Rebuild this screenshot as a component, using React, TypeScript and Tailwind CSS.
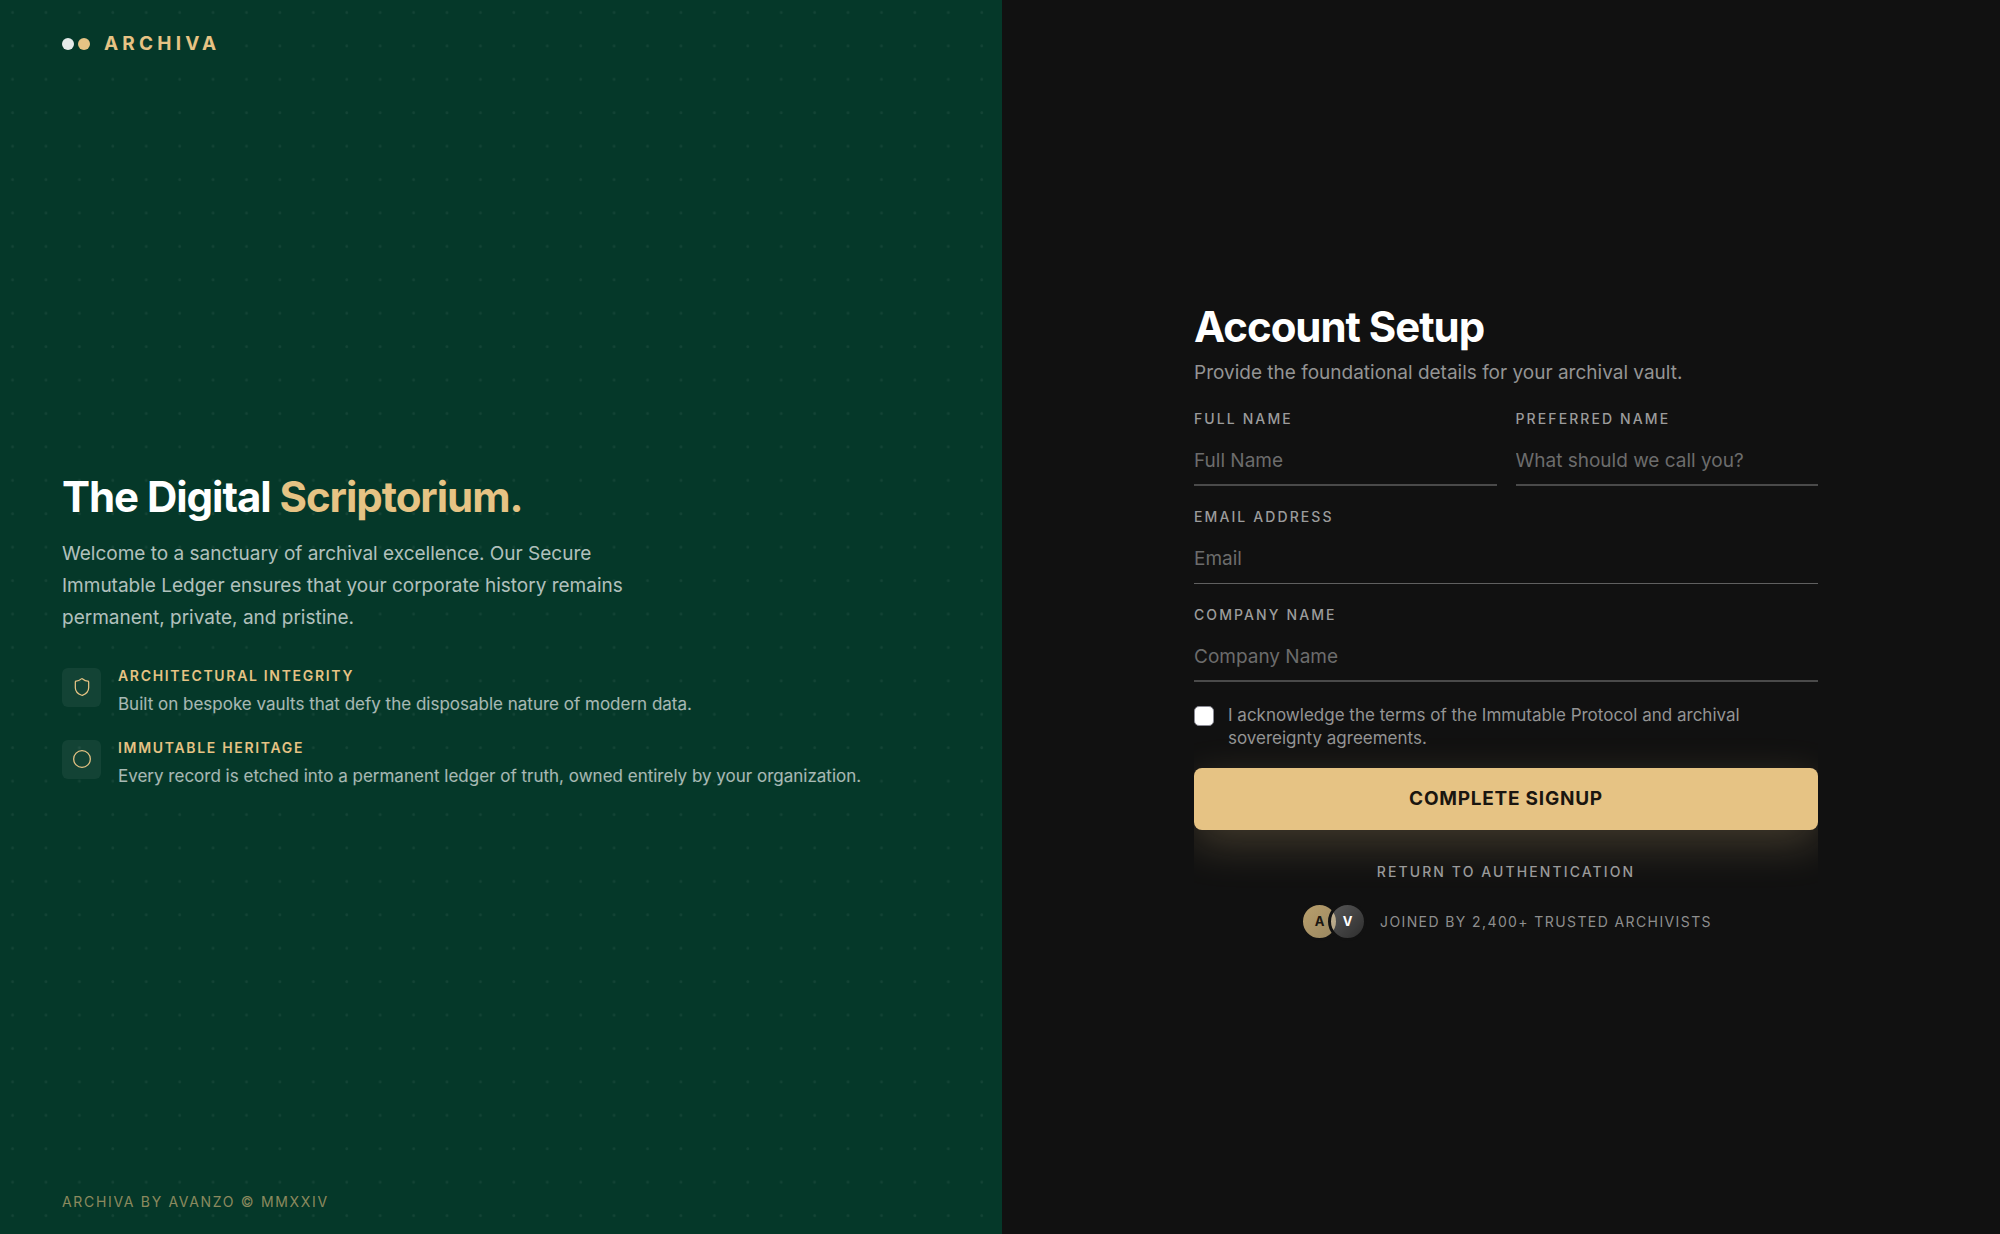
import React from "react";
import { Circle, Shield, type LucideIcon } from "lucide-react";

const FEATURES: { icon: LucideIcon; title: string; text: string }[] = [
  {
    icon: Shield,
    title: "Architectural Integrity",
    text: "Built on bespoke vaults that defy the disposable nature of modern data.",
  },
  {
    icon: Circle,
    title: "Immutable Heritage",
    text: "Every record is etched into a permanent ledger of truth, owned entirely by your organization.",
  },
];

function DotGrid() {
  return (
    <svg aria-hidden="true" className="pointer-events-none absolute inset-0 h-full w-full">
      <defs>
        <pattern
          id="dots"
          width="24"
          height="24"
          patternUnits="userSpaceOnUse"
          patternTransform="scale(1.3925)"
        >
          <circle cx="9" cy="9" r="1" fill="#fff" fillOpacity="0.06" />
        </pattern>
      </defs>
      <rect width="100%" height="100%" fill="url(#dots)" />
    </svg>
  );
}

function BrandPanel() {
  return (
    <section className="relative flex w-[50.1%] flex-col justify-between bg-[#053829] px-[62px] py-[22px]">
      <DotGrid />
      <header className="relative flex h-11 items-center gap-3.5">
        <span className="flex gap-1" aria-hidden="true">
          <span className="size-3 rounded-full bg-[#e6ebe9]" />
          <span className="size-3 rounded-full bg-[#e6c384]" />
        </span>
        <span className="text-[19px] leading-6 font-bold tracking-[0.22em] text-[#e6c384]">
          ARCHIVA
        </span>
      </header>

      <div className="relative">
        <h1 className="text-[42px] leading-[52px] font-bold tracking-tight text-white">
          The Digital <span className="text-[#e6c384]">Scriptorium.</span>
        </h1>
        <p className="mt-[15px] max-w-[600px] text-[19px] leading-8 text-white/70">
          Welcome to a sanctuary of archival excellence. Our Secure Immutable Ledger ensures that
          your corporate history remains permanent, private, and pristine.
        </p>
        <ul className="mt-8 flex flex-col gap-[22px]">
          {FEATURES.map(({ icon: Icon, title, text }) => (
            <li key={title} className="flex items-start gap-[17px]">
              <span className="mt-0.5 flex size-[39px] shrink-0 items-center justify-center rounded-md bg-white/6">
                <Icon size={20} strokeWidth={1.5} className="text-[#e6c384]" aria-hidden="true" />
              </span>
              <div>
                <h2 className="text-[14px] leading-5 font-semibold tracking-[0.12em] text-[#e6c384] uppercase">
                  {title}
                </h2>
                <p className="mt-1.5 text-[17px] leading-6 text-white/65">{text}</p>
              </div>
            </li>
          ))}
        </ul>
      </div>

      <footer className="relative text-[14px] leading-5 tracking-[0.12em] text-[#e6c384]/60">
        ARCHIVA BY AVANZO © MMXXIV
      </footer>
    </section>
  );
}

function Field({
  id,
  label,
  placeholder,
  type = "text",
  line = "border-b-2 border-[#4a4a4a]",
}: {
  id: string;
  label: string;
  placeholder: string;
  type?: string;
  line?: string;
}) {
  return (
    <div className="min-w-0">
      <label
        htmlFor={id}
        className="block text-[14px] leading-5 font-medium tracking-[0.15em] text-[#9c9c9c] uppercase"
      >
        {label}
      </label>
      <input
        id={id}
        type={type}
        placeholder={placeholder}
        className={`mt-[7px] block h-[50px] w-full rounded-none bg-transparent text-[19px] text-white outline-none placeholder:text-[#6c6c6c] focus:border-[#e6c384] ${line}`}
      />
    </div>
  );
}

function SignupForm() {
  return (
    <main className="flex flex-1 flex-col items-center justify-center bg-[#111111] pt-2 pr-8 pl-[42px]">
      <form
        className="w-full max-w-[624px] overflow-x-clip"
        onSubmit={(event) => event.preventDefault()}
      >
        <h2 className="text-[42px] leading-[52px] font-bold tracking-tight text-white">
          Account Setup
        </h2>
        <p className="mt-1.5 text-[19px] leading-7 text-[#949494]">
          Provide the foundational details for your archival vault.
        </p>

        <div className="mt-[22px] grid grid-cols-2 gap-x-[19px] gap-y-[21px]">
          <Field id="full-name" label="Full Name" placeholder="Full Name" />
          <Field
            id="preferred-name"
            label="Preferred Name"
            placeholder="What should we call you?"
          />
          <div className="col-span-2">
            <Field
              id="email"
              type="email"
              label="Email Address"
              placeholder="Email"
              line="border-b border-[#606060]"
            />
          </div>
          <div className="col-span-2">
            <Field id="company" label="Company Name" placeholder="Company Name" />
          </div>
        </div>

        <div className="mt-[22px] flex items-start gap-3.5">
          <input
            id="terms"
            type="checkbox"
            className="mt-0.5 size-5 shrink-0 appearance-none rounded-[5px] border border-[#8a8a94] bg-white checked:bg-[#e6c384]"
          />
          <label htmlFor="terms" className="text-[17px] leading-[23px] text-[#949494]">
            I acknowledge the terms of the Immutable Protocol and archival sovereignty agreements.
          </label>
        </div>

        <button
          type="submit"
          className="mt-[18px] flex h-[62px] w-full items-center justify-center rounded-lg bg-[#e6c384] text-[19px] font-bold tracking-[0.04em] text-[#1a1610] shadow-[0_14px_44px_rgba(230,195,132,0.23)]"
        >
          COMPLETE SIGNUP
        </button>

        <div className="relative mt-8 text-center">
          <a
            href="#authentication"
            className="block text-[14px] leading-5 font-medium tracking-[0.15em] text-[#9a9a9a]"
          >
            RETURN TO AUTHENTICATION
          </a>
        </div>

        <div className="mt-5 flex items-center justify-center gap-[13px]">
          <div className="flex text-[13px] font-bold" aria-hidden="true">
            <span className="flex size-[39px] items-center justify-center rounded-full border-[3px] border-[#111111] bg-linear-to-br from-[#b99f6c] to-[#998761] text-[#1a1610]">
              A
            </span>
            <span className="-ml-[11px] flex size-[39px] items-center justify-center rounded-full border-[3px] border-[#111111] bg-linear-to-br from-white/30 to-white/12 text-white">
              V
            </span>
          </div>
          <p className="text-[14px] leading-5 tracking-widest text-[#8e8e8e]">
            JOINED BY 2,400+ TRUSTED ARCHIVISTS
          </p>
        </div>
      </form>
    </main>
  );
}

export default function App() {
  return (
    <div className="flex min-h-screen font-['Inter',sans-serif] antialiased">
      <BrandPanel />
      <SignupForm />
    </div>
  );
}
